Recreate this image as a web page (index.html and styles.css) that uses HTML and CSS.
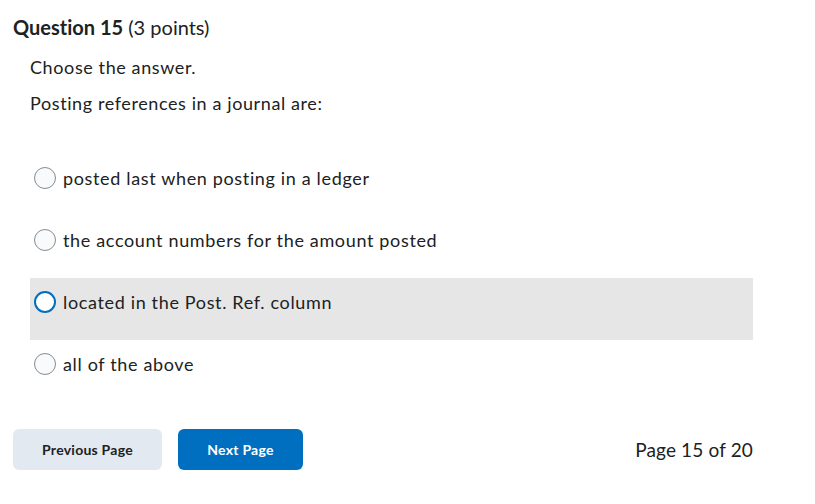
FILE: index.html
```html
<!DOCTYPE html>
<html lang="en">
<head>
  <meta charset="UTF-8" />
  <title>Question 15</title>
  <link rel="stylesheet" href="styles.css">
</head>
<body>
  <div class="page">
    <h1 class="q-title"><strong>Question 15</strong> <span class="points">(3 points)</span></h1>

    <div class="q-body">
      <p>Choose the answer.</p>
      <p>Posting references in a journal are:</p>

      <div class="options">
        <label class="option">
          <span class="radio"></span>
          <span class="opt-text">posted last when posting in a ledger</span>
        </label>
        <label class="option">
          <span class="radio"></span>
          <span class="opt-text">the account numbers for the amount posted</span>
        </label>
        <label class="option active">
          <span class="radio"></span>
          <span class="opt-text">located in the Post. Ref. column</span>
        </label>
        <label class="option">
          <span class="radio"></span>
          <span class="opt-text">all of the above</span>
        </label>
      </div>
    </div>

    <div class="footer">
      <div class="buttons">
        <button class="btn btn-secondary">Previous Page</button>
        <button class="btn btn-primary">Next Page</button>
      </div>
      <div class="page-count">Page 15 of 20</div>
    </div>
  </div>
</body>
</html>
```

FILE: styles.css
```css
body, html {
  margin: 0;
  padding: 0;
  background: #fff;
  color: #202122;
  font-family: Lato, "Noto Sans", sans-serif;
  font-variant-ligatures: none;
}
.page {
  width: 740px;
  padding: 15px 0 0 13px;
}
.q-title {
  margin: 0;
  font-size: 20px;
  line-height: 24px;
  font-weight: normal;
}
.q-title strong {
  font-weight: bold;
}
.q-body {
  padding-left: 17px;
  margin-top: 16px;
}
.q-body p {
  margin: 0 0 12px;
  font-size: 18px;
  line-height: 24px;
  letter-spacing: 0.6px;
}
.options {
  margin-top: 39px;
}
.option {
  display: flex;
  align-items: flex-start;
  height: 62px;
  box-sizing: border-box;
  padding: 12px 0 0 4px;
  font-size: 18px;
  line-height: 24px;
  letter-spacing: 0.65px;
}
.option.active {
  background: #e6e6e6;
}
.radio {
  width: 20px;
  height: 20px;
  margin-top: 1px;
  margin-right: 7px;
  border: 1px solid #868c8f;
  border-radius: 50%;
  background: #f9fafb;
  flex-shrink: 0;
}
.option.active .radio {
  width: 18px;
  height: 18px;
  border: 2px solid #006fbf;
  background: #fff;
}
.footer {
  display: flex;
  justify-content: space-between;
  align-items: center;
  margin-top: 27px;
}
.buttons {
  display: flex;
  gap: 16px;
}
.btn {
  height: 41px;
  border: none;
  border-radius: 6px;
  font-family: Lato, "Noto Sans", sans-serif;
  font-size: 14px;
  font-weight: bold;
  letter-spacing: 0.25px;
  cursor: pointer;
}
.btn-secondary {
  width: 149px;
  background: #e3e9f1;
  color: #202122;
}
.btn-primary {
  width: 125px;
  background: #006fbf;
  color: #fff;
}
.page-count {
  font-size: 19px;
  letter-spacing: 0.15px;
}
```
